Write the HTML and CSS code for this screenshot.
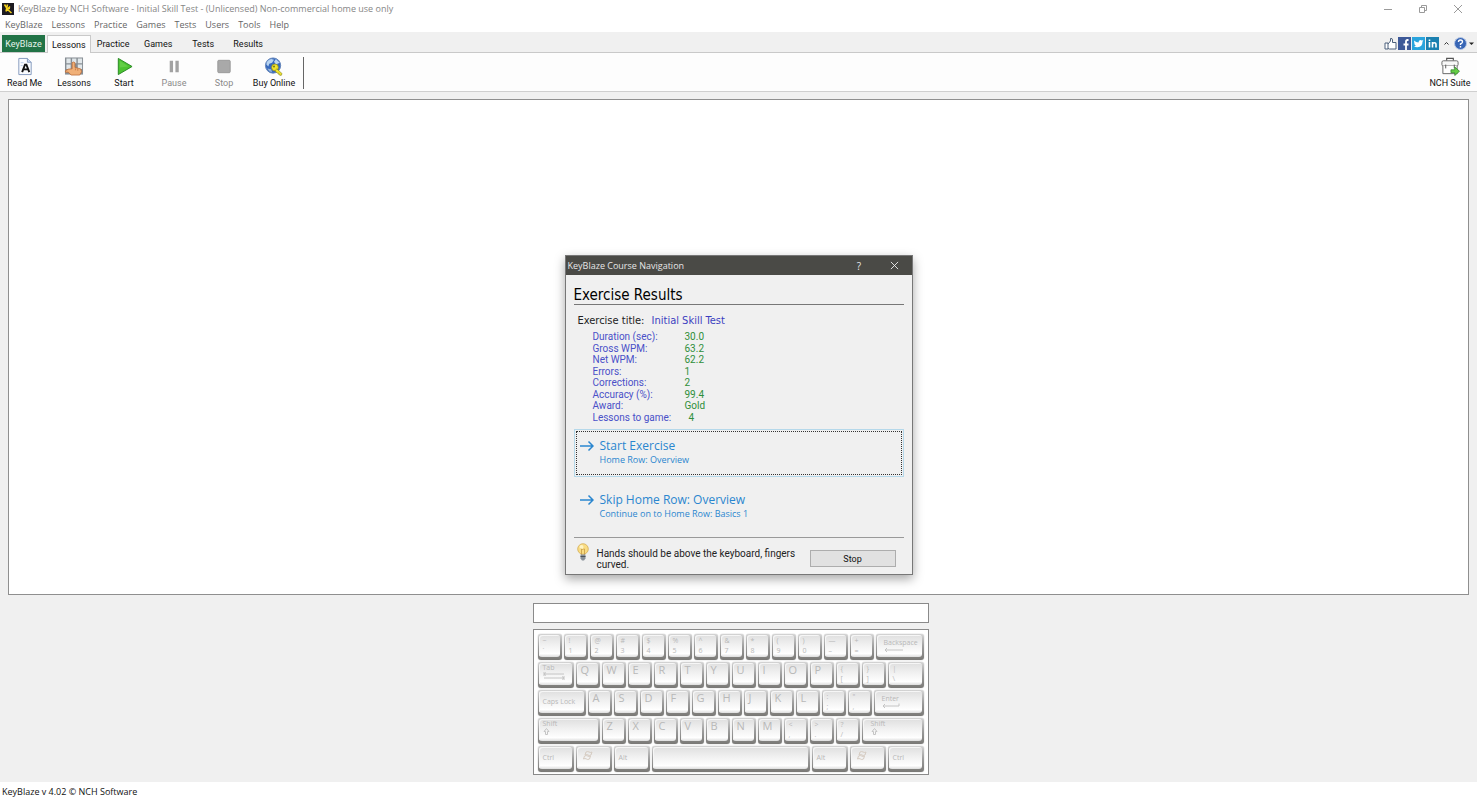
FILE: index.html
```html
<!DOCTYPE html>
<html lang="en">
<head>
<meta charset="utf-8">
<title>KeyBlaze by NCH Software</title>
<link rel="stylesheet" href="styles.css">
</head>
<body>
<div class="app">
  <header class="titlebar">
    <svg class="app-icon" viewBox="0 0 12 12" aria-hidden="true"><rect width="12" height="12" fill="#1d1b22"/><path d="M2.500 1.500 5 5.500M5.500 1.500 4 8.500M4 5.500h4M5 6 9.500 10M5.500 6 8 3.500" stroke="#f5d21c" stroke-width="1.500" fill="none"/></svg>
    <span class="title-text">KeyBlaze by NCH Software - Initial Skill Test - (Unlicensed) Non-commercial home use only</span>
    <div class="win-buttons">
      <button aria-label="Minimize"><svg viewBox="0 0 10 10"><path d="M1 5.500h8"/></svg></button>
      <button aria-label="Restore"><svg viewBox="0 0 10 10"><path d="M1.500 3.500h5v5h-5zM3.500 3.500v-2h5v5h-2"/></svg></button>
      <button aria-label="Close"><svg viewBox="0 0 10 10"><path d="m1 1 8 8M9 1 1 9"/></svg></button>
    </div>
  </header>
  <nav class="menubar">
    <button>KeyBlaze</button><button>Lessons</button><button>Practice</button><button>Games</button><button>Tests</button><button>Users</button><button>Tools</button><button>Help</button>
  </nav>
  <div class="tabbar">
    <button class="tab brand">KeyBlaze</button>
    <button class="tab active">Lessons</button>
    <button class="tab">Practice</button>
    <button class="tab">Games</button>
    <button class="tab">Tests</button>
    <button class="tab">Results</button>
    <div class="social">
      <button aria-label="Like"><svg viewBox="0 0 13 13"><path d="M1 6h3v6H1zM4 7l2.500-3V1.500Q8.500 1 8.500 3V5.500h3.500V12H5.500L4 11.500" fill="#fff" stroke="#4d617c"/></svg></button>
      <button aria-label="Facebook"><svg viewBox="0 0 13 13"><rect width="13" height="13" fill="#3d5998"/><path d="M10.500 3H9.500Q8 3 8 4.500V13M5.500 7.500h5" stroke="#fff" stroke-width="1.800" fill="none"/></svg></button>
      <button aria-label="Twitter"><svg viewBox="0 0 13 13"><rect width="13" height="13" fill="#2aa4dd"/><path d="M2 3.500Q4 5.500 6.500 5.500 6.500 3 8.500 3l1.300.6 1.500-.4-.8 1.500Q10.500 10 5.500 10.200 3.500 10.300 2 9.300L4 8.800Q2.500 8 2.500 7L2.300 5.800z" fill="#fff"/></svg></button>
      <button aria-label="LinkedIn"><svg viewBox="0 0 13 13"><rect width="13" height="13" fill="#1b80b0"/><path d="M3.500 5v5.500M3.500 2.500V4M6.500 10.500V5M6.500 7Q7 5.700 8.500 5.700 10 5.700 10 7.500v3" stroke="#fff" stroke-width="1.600" fill="none"/></svg></button>
      <button aria-label="Collapse"><svg class="caret" viewBox="0 0 13 13"><path d="m4.500 7.500 2-2 2 2" stroke="#333" fill="none"/></svg></button>
      <button aria-label="Help"><svg viewBox="0 0 13 13"><circle cx="6.500" cy="6.500" r="6" fill="#3866b5" stroke="#b8c8e4"/><path d="M4.500 5Q4.500 3 6.500 3T8.500 5Q8.500 6 6.500 7V8M6.500 9v1.500" stroke="#fff" stroke-width="1.400" fill="none"/></svg></button>
      <button class="drop" aria-label="Help options"><svg viewBox="0 0 7 13"><path d="M1 5.500h5L3.500 8z" fill="#222"/></svg></button>
    </div>
  </div>
  <div class="toolbar">
    <button class="tool"><svg viewBox="0 0 20 20"><path d="M3.500 1.500h9l4 4v13h-13z" fill="#fafcff" stroke="#8398bd"/><path d="M12.500 1.500v4h4" fill="#cfdcf2" stroke="#8398bd"/><path d="M5.500 6h3M5.500 9h2" stroke="#b7c8e6"/><path d="m7 16 3-8h1.500l3 8M8.500 13h5" fill="none" stroke="#111" stroke-width="2"/></svg><span>Read Me</span></button>
    <button class="tool"><svg viewBox="0 0 20 20"><rect x=".5" y=".5" width="19" height="18" fill="#878e94"/><path d="M2 1.500h4.500v5H2zM8 1.500h4.500v5H8zM14 1.500h4.500v5H14zM2 8h4.500v4.500H2zM14 8h4.500v4.500H14z" fill="#e1e7ea"/><path d="M1 14.500Q4 12 8 12.500V6Q9.500 4.500 11 6v5l6 1.500 1 3-2 3.500H7l-3-3H1z" fill="#f0b078" stroke="#bb6a35" stroke-width=".8"/><path d="M11.500 12v2M14 12.500v2" stroke="#bb6a35" stroke-width=".7"/></svg><span>Lessons</span></button>
    <button class="tool"><svg viewBox="0 0 20 20"><path d="M4 1.500v17L18.500 10z" fill="#4bc331" stroke="#258720" stroke-linejoin="round"/><path d="M5.500 4v7l9-1z" fill="#79d95b" opacity=".5"/></svg><span>Start</span></button>
    <button class="tool" disabled><svg viewBox="0 0 20 20"><path d="M5.500 4h3.500v12H5.500zM11.500 4H15v12h-3.500z" fill="#a2a2a2"/></svg><span>Pause</span></button>
    <button class="tool" disabled><svg viewBox="0 0 20 20"><rect x="3.500" y="3.500" width="13" height="13" rx="1" fill="#a9a9a9" stroke="#999"/></svg><span>Stop</span></button>
    <button class="tool"><svg viewBox="0 0 20 20"><circle cx="9" cy="9" r="8" fill="#3769bd" stroke="#6283b7"/><path d="M2 8Q2 3 7 2l3 1-2 3-3 1-1 3zM12 2l4 4-4 2-2-3z" fill="#b8d4f0"/><path d="m3 12 4 1 1 3-3-1z" fill="#98b6d8"/><g stroke="#898719" stroke-width=".7" fill="#f0e42b"><circle cx="11" cy="11" r="3.600"/><path d="m13 12.500 5.500 5-1 2-2.500-1v-1.500h-1.500l-2.500-2.500z"/></g><circle cx="10" cy="10" r="1" fill="#70701c"/></svg><span>Buy Online</span></button>
    <i class="divider"></i>
    <button class="tool suite"><svg viewBox="0 0 20 20"><path d="M6.500 4V1.500h7V4" fill="none" stroke="#555" stroke-width="1.200"/><rect x="1.500" y="4" width="17" height="5.500" rx="1.500" fill="#f8f8f8" stroke="#666"/><path d="M2.500 9.500v8h15v-8" fill="#fff" stroke="#666"/><path d="M5.500 8v4M14.500 8v4" stroke="#555"/><path d="M11 13.500h4v-3l5 4.500-5 4.500v-3h-4z" fill="#65ce45" stroke="#31832a" stroke-width=".8"/></svg><span>NCH Suite</span></button>
  </div>

  <main class="workspace">
    <section class="text-panel" aria-label="Exercise text"></section>
    <div class="practice">
      <input class="typing" type="text" aria-label="Typing">
      <div class="keyboard">
        <div class="krow">
          <div class="key sym"><span>~</span><span>`</span></div><div class="key sym"><span>!</span><span>1</span></div><div class="key sym"><span>@</span><span>2</span></div><div class="key sym"><span>#</span><span>3</span></div><div class="key sym"><span>$</span><span>4</span></div><div class="key sym"><span>%</span><span>5</span></div><div class="key sym"><span>^</span><span>6</span></div><div class="key sym"><span>&amp;</span><span>7</span></div><div class="key sym"><span>*</span><span>8</span></div><div class="key sym"><span>(</span><span>9</span></div><div class="key sym"><span>)</span><span>0</span></div><div class="key sym"><span>—</span><span>–</span></div><div class="key sym"><span>+</span><span>=</span></div><div class="key wide grow back"><span>Backspace</span><svg viewBox="0 0 20 5"><path d="M3 .5 1 2.500l2 2M1 2.500h18"/></svg></div>
        </div>
        <div class="krow">
          <div class="key wide w-mod"><span>Tab</span><svg viewBox="0 0 22 8"><path d="M3 .5 1 2l2 1.500M1 2h20M19 4.500 21 6l-2 1.500M21 6H1M1 0v4M21 4v4"/></svg></div><div class="key">Q</div><div class="key">W</div><div class="key">E</div><div class="key">R</div><div class="key">T</div><div class="key">Y</div><div class="key">U</div><div class="key">I</div><div class="key">O</div><div class="key">P</div><div class="key sym"><span>{</span><span>[</span></div><div class="key sym"><span>}</span><span>]</span></div><div class="key sym grow"><span>|</span><span>\</span></div>
        </div>
        <div class="krow">
          <div class="key wide mid w-caps"><span>Caps Lock</span></div><div class="key">A</div><div class="key">S</div><div class="key">D</div><div class="key">F</div><div class="key">G</div><div class="key">H</div><div class="key">J</div><div class="key">K</div><div class="key">L</div><div class="key sym"><span>:</span><span>;</span></div><div class="key sym"><span>"</span><span>,</span></div><div class="key wide grow back"><span>Enter</span><svg viewBox="0 0 20 5"><path d="M3 .5 1 2.500l2 2M1 2.500h16V0"/></svg></div>
        </div>
        <div class="krow">
          <div class="key wide w-shift"><span>Shift</span><svg viewBox="0 0 22 8"><path d="M3.500.5 1 3.500h1.500v3h2v-3H6z"/></svg></div><div class="key">Z</div><div class="key">X</div><div class="key">C</div><div class="key">V</div><div class="key">B</div><div class="key">N</div><div class="key">M</div><div class="key sym"><span>&lt;</span><span>,</span></div><div class="key sym"><span>&gt;</span><span>.</span></div><div class="key sym"><span>?</span><span>/</span></div><div class="key wide grow right-shift"><span>Shift</span><svg viewBox="0 0 22 8"><path d="M3.500.5 1 3.500h1.500v3h2v-3H6z"/></svg></div>
        </div>
        <div class="krow">
          <div class="key wide mid w-mod"><span>Ctrl</span></div><div class="key wide w-mod"><svg class="flag" viewBox="0 0 14 10"><path d="M4 1q2-1 3 0 2 1 3 0L9 4Q7 5 6 4 5 3 3 4zM2.500 5q2-1 3 0 2 1 3 0L7.500 8Q5.500 9 4.500 8 3 7 1.500 8z"/></svg></div><div class="key wide mid w-mod"><span>Alt</span></div><div class="key grow"></div><div class="key wide mid w-mod"><span>Alt</span></div><div class="key wide w-mod"><svg class="flag" viewBox="0 0 14 10"><path d="M4 1q2-1 3 0 2 1 3 0L9 4Q7 5 6 4 5 3 3 4zM2.500 5q2-1 3 0 2 1 3 0L7.500 8Q5.500 9 4.500 8 3 7 1.500 8z"/></svg></div><div class="key wide mid w-mod"><span>Ctrl</span></div>
        </div>
      </div>
    </div>
  </main>
  <footer class="status">KeyBlaze v 4.02 © NCH Software</footer>

  <section class="dialog" role="dialog" aria-labelledby="dlg-title">
    <div class="dlg-bar">
      <span id="dlg-title">KeyBlaze Course Navigation</span>
      <button aria-label="Help">?</button>
      <button aria-label="Close"><svg viewBox="0 0 10 10"><path d="m1 1 8 8M9 1 1 9"/></svg></button>
    </div>
    <div class="dlg-body">
      <h1>Exercise Results</h1>
      <p class="exercise">Exercise title: <span>Initial Skill Test</span></p>
      <table class="results">
        <tr><th scope="row">Duration (sec):</th><td>30.0</td></tr>
        <tr><th scope="row">Gross WPM:</th><td>63.2</td></tr>
        <tr><th scope="row">Net WPM:</th><td>62.2</td></tr>
        <tr><th scope="row">Errors:</th><td>1</td></tr>
        <tr><th scope="row">Corrections:</th><td>2</td></tr>
        <tr><th scope="row">Accuracy (%):</th><td>99.4</td></tr>
        <tr><th scope="row">Award:</th><td>Gold</td></tr>
        <tr><th scope="row">Lessons to game:</th><td class="remaining">4</td></tr>
      </table>
      <button class="command focused"><svg viewBox="0 0 14 12"><path d="M0 6h13M8.500 1.500 13 6l-4.500 4.500"/></svg><span><strong>Start Exercise</strong><small>Home Row: Overview</small></span></button>
      <button class="command"><svg viewBox="0 0 14 12"><path d="M0 6h13M8.500 1.500 13 6l-4.500 4.500"/></svg><span><strong>Skip Home Row: Overview</strong><small>Continue on to Home Row: Basics 1</small></span></button>
      <div class="hint">
        <svg viewBox="0 0 12 18"><circle cx="6" cy="6" r="5.300" fill="#f9dc83" stroke="#d4ad54" stroke-width=".8"/><circle cx="4.500" cy="4" r="2" fill="#fff4c4"/><path d="M4 5.500 5.500 7 7 5.500M4.500 6v6M7.500 6v6" stroke="#c69a45" stroke-width=".8" fill="none"/><path d="M3.500 11.500h5v4l-1.500 2H5l-1.500-2z" fill="#89919a"/><path d="M3.500 13.500h5" stroke="#4b525b"/></svg>
        <p>Hands should be above the keyboard, fingers curved.</p>
        <button class="stop">Stop</button>
      </div>
    </div>
  </section>
</div>
</body>
</html>
```
FILE: styles.css
```css
* { box-sizing: border-box; }
body { margin: 0; font-family: "Open Sans", "Noto Sans", sans-serif; font-size: 9px; line-height: 12px; color: #222; }
button { margin: 0; padding: 0; border: 0; background: none; font: inherit; color: inherit; white-space: nowrap; }
svg { display: block; }
.app { position: relative; display: flex; flex-direction: column; min-height: 100vh; background: #fff; }

.titlebar { display: flex; align-items: center; height: 18px; padding-left: 2px; color: #868686; }
.app-icon { width: 12px; height: 12px; margin-right: 4px; }
.win-buttons { display: flex; margin-left: auto; padding-right: 2px; }
.win-buttons button { display: flex; justify-content: center; width: 35px; }
.win-buttons svg { width: 10px; height: 10px; fill: none; stroke: #9a9a9a; stroke-width: 1; }
.menubar { display: flex; gap: 9px; height: 14px; padding-left: 5px; color: #666; }

.tabbar { display: flex; align-items: stretch; height: 21px; padding: 3px 2px 0; background: #f0f0f0; border-bottom: 1px solid #c9c9c9; font-family: Roboto, "Noto Sans", sans-serif; }
.tab { min-width: 45px; padding: 0 5px; color: #111; }
.brand { min-width: 43px; padding: 0 3px; margin-right: 2px; background: #217346; color: #e4f2ea; }
.active { min-width: 43px; padding: 0 4px; margin-bottom: -1px; background: #fdfdfd; border: 1px solid #c9c9c9; border-bottom: 0; }
.social { display: flex; align-items: center; gap: 1px; margin-left: auto; }
.social svg { width: 13px; height: 13px; }
.social .drop svg { width: 7px; }

.toolbar { display: flex; height: 39px; padding: 4px 0 2px; background: #fdfdfd; border-bottom: 1px solid #cfcfcf; font-family: Roboto, "Noto Sans", sans-serif; }
.tool { display: flex; flex-direction: column; align-items: center; gap: 1px; width: 50px; color: #111; }
.tool:first-child { width: 49px; }
.tool svg { width: 20px; height: 20px; }
.tool:disabled { color: #8a8a8a; }
.divider { width: 1px; margin-left: 4px; background: #666; }
.suite { margin-left: auto; width: 54px; }

.workspace { flex: 1; display: flex; flex-direction: column; gap: 8px; padding: 7px 8px; background: #f0f0f0; }
.text-panel { flex: 1; background: #fff; border: 1px solid #8f8f8f; }
.practice { display: flex; flex-direction: column; align-items: center; gap: 6px; padding-right: 16px; }
.typing { width: 396px; height: 20px; padding: 2px 4px; background: #fff; border: 1px solid #8a8a8a; border-radius: 0; font: inherit; }
.keyboard { display: flex; flex-direction: column; gap: 2px; width: 396px; padding: 4px 4px 2px; background: #fff; border: 1px solid #8a8a8a; }
.krow { display: flex; gap: 2px; }
.key { position: relative; isolation: isolate; width: 24px; height: 26px; padding: 2px 5px; border-radius: 3px; background: linear-gradient(#d4d4d4 0%, #9c9c9c 50%, #7a7976 100%); box-shadow: 0 0 1px #888; color: #b8b8b8; font-size: 11px; }
.key::before { content: ""; position: absolute; z-index: -1; inset: 1px 2px 3px 1px; border-radius: 3px; background: linear-gradient(#dfdfdf 0%, #efefef 40%, #fbfbfb 75%, #fff 85%, #dcdcdc 100%); box-shadow: inset 1px 1px 0 #f6f6f6; }
.sym { display: flex; flex-direction: column; gap: 1px; font-size: 7px; line-height: 9px; }
.wide { font-size: 7px; line-height: 8px; }
.wide svg { width: 22px; height: 8px; fill: none; stroke: #c4c4c4; stroke-width: 1; }
.mid { padding-top: 8px; }
.back { padding: 5px 0 0 8px; }
.back svg { width: 20px; height: 6px; }
.right-shift { padding-left: 9px; }
.wide .flag { width: 14px; height: 10px; margin: 3px 0 0 1px; stroke: #d6ccc2; }
.grow { flex: 1; }
.w-mod { width: 36px; }
.w-caps { width: 48px; }
.w-shift { width: 62px; }
.status { height: 18px; padding: 4px 2px 0; color: #111; }

.dialog { position: absolute; top: 255px; left: 50%; width: 348px; margin-left: -174px; background: #f0f0f0; border: 1px solid #777; box-shadow: 0 4px 10px rgba(0, 0, 0, .35); font-family: Roboto, "Noto Sans", sans-serif; }
.dlg-bar { display: flex; align-items: center; height: 19px; padding-left: 2px; background: #4a4a46; color: #e6e6e6; font-family: "Open Sans", "Noto Sans", sans-serif; }
.dlg-bar span { margin-right: auto; }
.dlg-bar button { display: flex; justify-content: center; width: 35px; font-size: 10px; }
.dlg-bar svg { width: 9px; height: 9px; fill: none; stroke: #eee; stroke-width: 1; }
.dlg-body { padding: 11px 8px 4px; }
h1 { margin: 0; border-bottom: 1px solid #777; font-family: "DejaVu Sans Condensed", "DejaVu Sans", sans-serif; font-size: 15px; line-height: 18px; font-weight: normal; color: #000; }
.exercise { margin: 8px 4px 2px; font-family: "DejaVu Sans Condensed", "DejaVu Sans", sans-serif; font-size: 11px; line-height: 16px; }
.exercise span { margin-left: 4px; color: #3b3fc0; }
.results { height: 92px; margin-left: 19px; border-collapse: collapse; font-size: 10px; line-height: 11px; }
.results th { width: 92px; padding: 0; text-align: left; font-weight: normal; color: #4a50c8; }
.results td { padding: 0; color: #2f8f3a; }
.results .remaining { padding-left: 4px; }
.command { display: flex; align-items: flex-start; gap: 6px; width: 100%; height: 48px; margin-top: 6px; padding: 9px 6px; color: #2a86cf; text-align: left; font-family: "Open Sans", "Noto Sans", sans-serif; }
.focused { border: 1px solid #b5d8ea; outline: 1px dotted #333; outline-offset: -3px; padding: 8px 5px; }
.command svg { width: 14px; height: 12px; margin-top: 2px; fill: none; stroke: #2a86cf; stroke-width: 1.5; }
.command strong, .command small { display: block; font-weight: normal; }
.command strong { font-size: 12px; line-height: 16px; }
.command small { font-size: 9px; line-height: 12px; }
.hint { display: flex; margin-top: 6px; padding: 5px 8px 0 3px; border-top: 1px solid #999; }
.hint svg { width: 12px; height: 18px; margin-right: 8px; }
.hint p { flex: 1; margin: 5px 0 0; font-size: 10px; line-height: 11px; }
.stop { width: 86px; height: 17px; margin-top: 7px; background: #e1e1e1; border: 1px solid #adadad; color: #111; }
```
